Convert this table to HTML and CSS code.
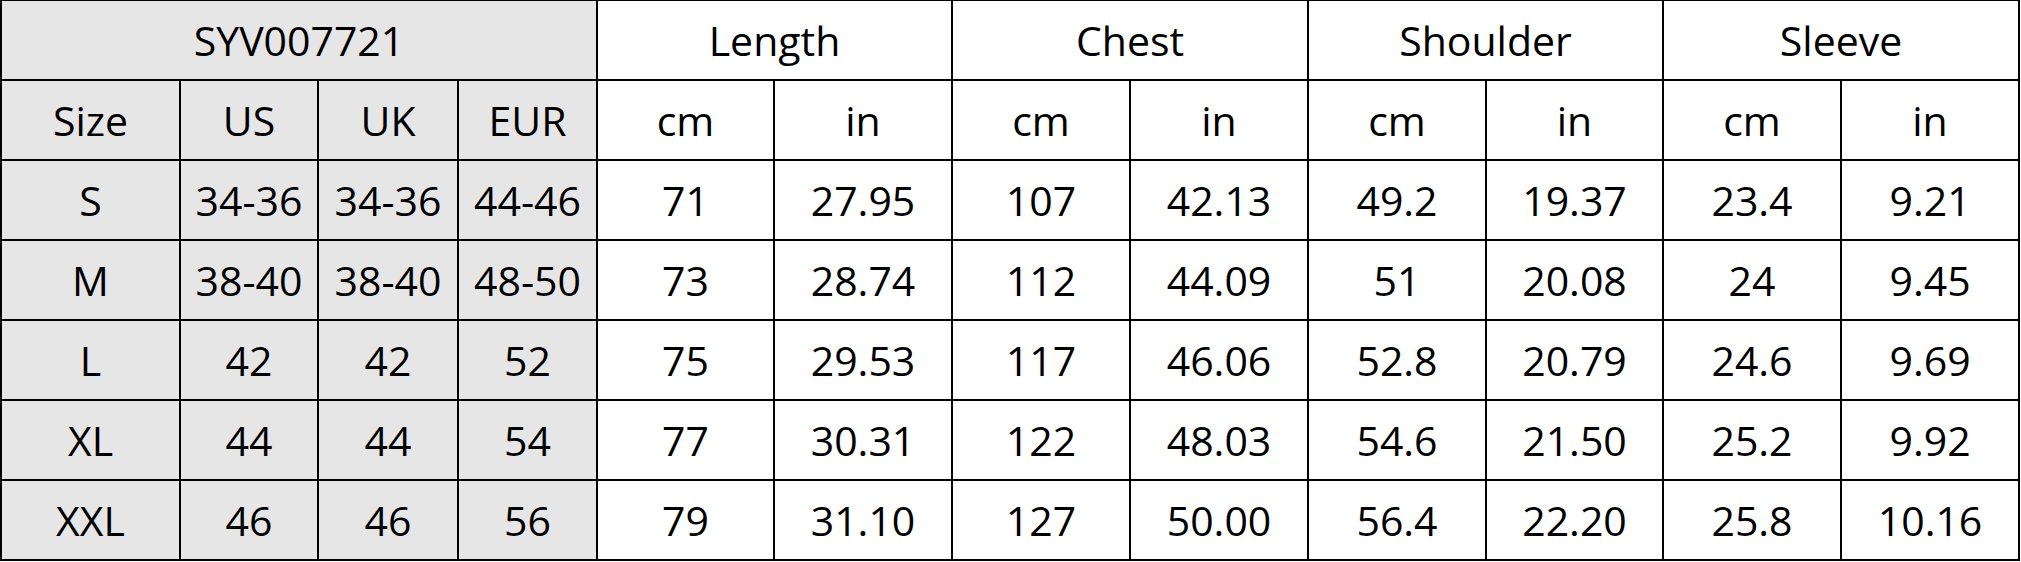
FILE: index.html
```html
<!DOCTYPE html>
<html>
<head>
<meta charset="utf-8">
<link rel="stylesheet" href="styles.css">
</head>
<body>
<table class="size-table">
  <colgroup>
    <col class="c-size"><col class="c-us"><col class="c-uk"><col class="c-eur">
    <col class="c-m1"><col class="c-m2"><col class="c-m2"><col class="c-m2">
    <col class="c-m2"><col class="c-m1"><col class="c-m2"><col class="c-m2">
  </colgroup>
  <tr>
    <td class="grey" colspan="4">SYV007721</td>
    <td colspan="2">Length</td>
    <td colspan="2">Chest</td>
    <td colspan="2">Shoulder</td>
    <td colspan="2">Sleeve</td>
  </tr>
  <tr>
    <td class="grey">Size</td><td class="grey">US</td><td class="grey">UK</td><td class="grey">EUR</td>
    <td>cm</td><td>in</td><td>cm</td><td>in</td><td>cm</td><td>in</td><td>cm</td><td>in</td>
  </tr>
  <tr>
    <td class="grey">S</td><td class="grey">34-36</td><td class="grey">34-36</td><td class="grey">44-46</td>
    <td>71</td><td>27.95</td><td>107</td><td>42.13</td><td>49.2</td><td>19.37</td><td>23.4</td><td>9.21</td>
  </tr>
  <tr>
    <td class="grey">M</td><td class="grey">38-40</td><td class="grey">38-40</td><td class="grey">48-50</td>
    <td>73</td><td>28.74</td><td>112</td><td>44.09</td><td>51</td><td>20.08</td><td>24</td><td>9.45</td>
  </tr>
  <tr>
    <td class="grey">L</td><td class="grey">42</td><td class="grey">42</td><td class="grey">52</td>
    <td>75</td><td>29.53</td><td>117</td><td>46.06</td><td>52.8</td><td>20.79</td><td>24.6</td><td>9.69</td>
  </tr>
  <tr>
    <td class="grey">XL</td><td class="grey">44</td><td class="grey">44</td><td class="grey">54</td>
    <td>77</td><td>30.31</td><td>122</td><td>48.03</td><td>54.6</td><td>21.50</td><td>25.2</td><td>9.92</td>
  </tr>
  <tr>
    <td class="grey">XXL</td><td class="grey">46</td><td class="grey">46</td><td class="grey">56</td>
    <td>79</td><td>31.10</td><td>127</td><td>50.00</td><td>56.4</td><td>22.20</td><td>25.8</td><td>10.16</td>
  </tr>
</table>
</body>
</html>
```

FILE: styles.css
```css
html, body {
  margin: 0;
  padding: 0;
  background: #ffffff;
}

.size-table {
  border-collapse: collapse;
  table-layout: fixed;
  width: 2020px;
  font-family: "Open Sans", "Noto Sans", sans-serif;
  font-size: 41px;
  color: #000;
}

.c-size { width: 179px; }
.c-us { width: 138px; }
.c-uk { width: 140px; }
.c-eur { width: 139px; }
.c-m1 { width: 177px; }
.c-m2 { width: 178px; }

.size-table td {
  border: 2px solid #000;
  height: 78px;
  padding: 0;
  text-align: center;
  vertical-align: middle;
  line-height: 1;
  white-space: nowrap;
}

.size-table tr:first-child td {
  border-top-width: 1px;
}

.size-table .grey {
  background: #e7e6e6;
}
```
